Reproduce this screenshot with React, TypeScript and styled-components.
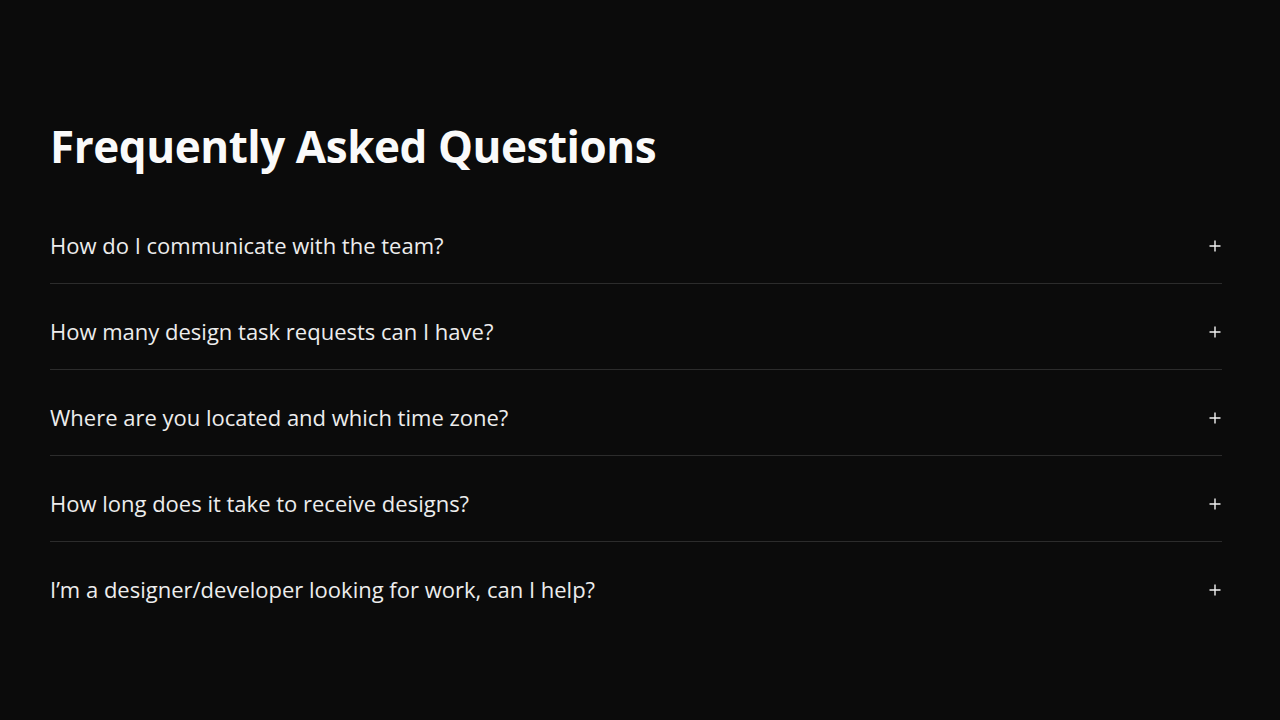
import React from 'react'
import styled, { createGlobalStyle } from 'styled-components'

const GlobalStyle = createGlobalStyle`
  html, body {
    margin: 0;
    padding: 0;
    background: #0b0b0b;
  }
  body {
    font-family: "Open Sans", "Noto Sans", "Liberation Sans", sans-serif;
    color: #f2f2f2;
  }
`

const questions = [
  'How do I communicate with the team?',
  'How many design task requests can I have?',
  'Where are you located and which time zone?',
  'How long does it take to receive designs?',
  'I’m a designer/developer looking for work, can I help?',
]

const Page = styled.main`
  min-height: 720px;
  box-sizing: border-box;
  padding: 119px 58px 0 50px;
`

const Heading = styled.h2`
  margin: 0 0 24px;
  font-size: 44px;
  line-height: 55px;
  font-weight: 700;
  color: #fafafa;
  letter-spacing: -0.45px;
`

const List = styled.ul`
  list-style: none;
  margin: 0;
  padding: 0;
`

const Item = styled.li<{ $last?: boolean }>`
  display: flex;
  align-items: center;
  justify-content: space-between;
  padding: 31px 0 21px;
  border-bottom: 1px solid ${(p) => (p.$last ? 'transparent' : '#2c2c2c')};
`

const Question = styled.span`
  font-size: 22px;
  line-height: 33px;
  color: #ededed;
`

const Toggle = styled.button`
  display: flex;
  align-items: center;
  justify-content: center;
  width: 14px;
  height: 14px;
  padding: 0;
  border: 0;
  background: none;
  color: #f2f2f2;
  cursor: pointer;
`

const Plus = () => (
  <svg width="12" height="12" viewBox="0 0 12 12" fill="none">
    <path d="M6 0.5v11M0.5 6h11" stroke="currentColor" strokeWidth="1.4" />
  </svg>
)

export default function App() {
  return (
    <>
      <GlobalStyle />
      <Page>
        <Heading>Frequently Asked Questions</Heading>
        <List>
          {questions.map((q, i) => (
            <Item key={q} $last={i === questions.length - 1}>
              <Question>{q}</Question>
              <Toggle aria-label="Expand">
                <Plus />
              </Toggle>
            </Item>
          ))}
        </List>
      </Page>
    </>
  )
}
